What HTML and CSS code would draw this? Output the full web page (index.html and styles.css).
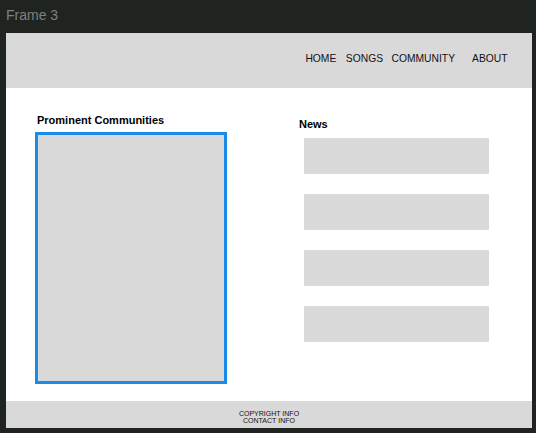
FILE: index.html
```html
<!DOCTYPE html>
<html>
<head>
<meta charset="utf-8">
<link rel="stylesheet" href="styles.css">
</head>
<body>
<div class="frame-label">Frame 3</div>
<div class="frame">
  <header class="topbar">
    <nav class="nav">
      <span class="nav-item">HOME</span>
      <span class="nav-item songs">SONGS</span>
      <span class="nav-item community">COMMUNITY</span>
      <span class="nav-item about">ABOUT</span>
    </nav>
  </header>
  <main class="content">
    <section class="col-left">
      <h2 class="heading heading-left">Prominent Communities</h2>
      <div class="community-box"></div>
    </section>
    <section class="col-right">
      <h2 class="heading">News</h2>
      <div class="news-list">
        <div class="news-item"></div>
        <div class="news-item"></div>
        <div class="news-item"></div>
        <div class="news-item"></div>
      </div>
    </section>
  </main>
  <footer class="footer">
    <div>COPYRIGHT INFO</div>
    <div>CONTACT INFO</div>
  </footer>
</div>
</body>
</html>
```

FILE: styles.css
```css
html, body {
  margin: 0;
  padding: 0;
}
body {
  width: 536px;
  height: 433px;
  background: #1f2421;
  font-family: "Liberation Sans", Arial, sans-serif;
  overflow: hidden;
}
.frame-label {
  height: 33px;
  box-sizing: border-box;
  padding: 7px 0 0 6px;
  font-size: 14px;
  line-height: 16px;
  color: #7d817f;
}
.frame {
  margin-left: 6px;
  width: 526px;
  height: 395px;
  background: #ffffff;
  display: flex;
  flex-direction: column;
}
.topbar {
  height: 55px;
  background: #d9d9d9;
  display: flex;
  justify-content: flex-end;
  align-items: flex-start;
  padding: 20px 24.5px 0 0;
  box-sizing: border-box;
}
.nav {
  display: flex;
  font-size: 10.3px;
  line-height: 12px;
  color: #111111;
}
.songs { margin-left: 9.5px; }
.community { margin-left: 8.5px; }
.about { margin-left: 17px; }
.content {
  flex: 1;
  display: flex;
  padding-left: 29px;
}
.heading {
  margin: 0;
  font-size: 11px;
  line-height: 13px;
  font-weight: bold;
  color: #000000;
}
.col-left {
  width: 192px;
  padding-top: 26px;
}
.heading-left {
  margin-left: 2px;
  margin-bottom: 5px;
}
.community-box {
  width: 192px;
  height: 252px;
  box-sizing: border-box;
  border: 3px solid #1a8be6;
  background: #d9d9d9;
}
.col-right {
  margin-left: 72px;
  padding-top: 30px;
}
.col-right .heading {
  margin-bottom: 7px;
}
.news-list {
  display: flex;
  flex-direction: column;
  gap: 20px;
  margin-left: 5px;
}
.news-item {
  width: 185px;
  height: 36px;
  background: #d9d9d9;
}
.footer {
  height: 27px;
  box-sizing: border-box;
  padding-top: 9px;
  background: #d9d9d9;
  text-align: center;
  font-size: 7px;
  line-height: 7.3px;
  color: #111111;
}
```
